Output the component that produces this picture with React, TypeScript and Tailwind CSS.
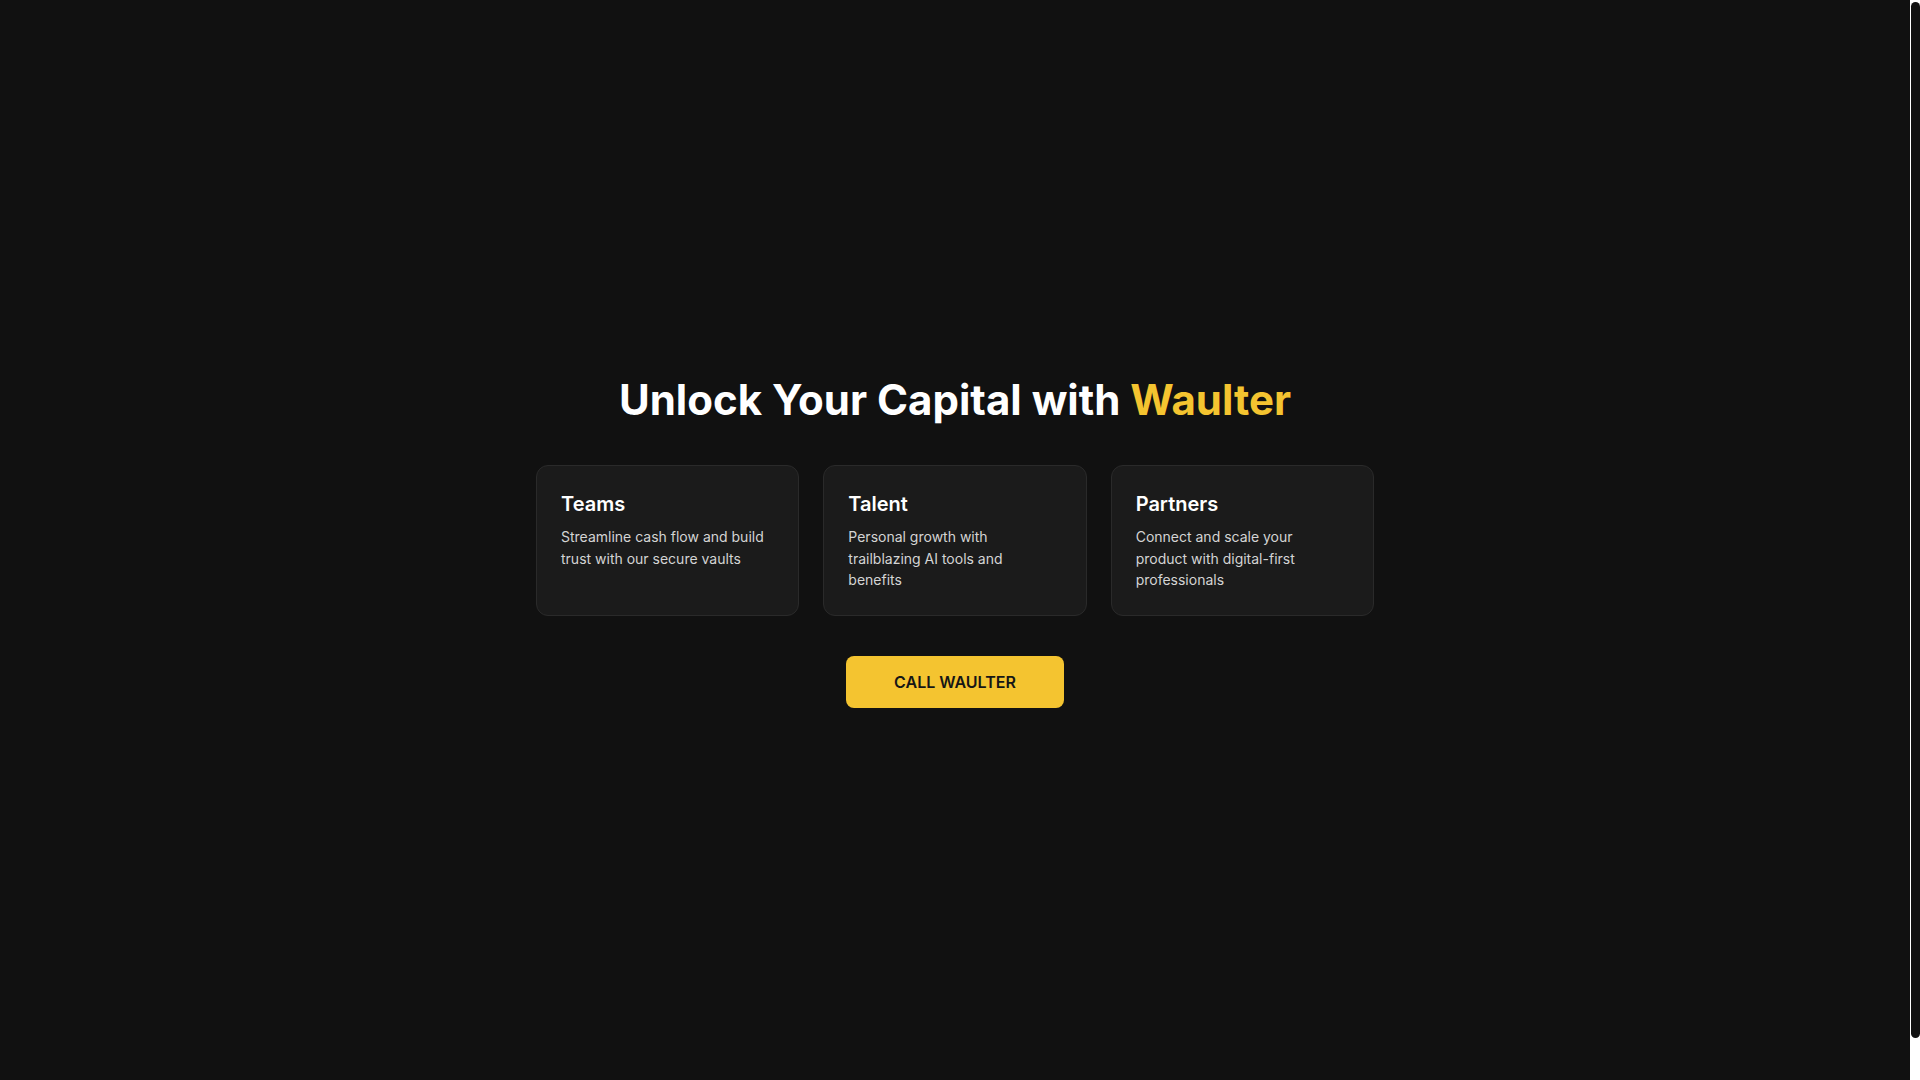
const cards = [
  { title: 'Teams', text: 'Streamline cash flow and build trust with our secure vaults' },
  { title: 'Talent', text: 'Personal growth with trailblazing AI tools and benefits' },
  { title: 'Partners', text: 'Connect and scale your product with digital-first professionals' },
];

export default function App() {
  return (
    <div
      className="flex h-screen overflow-hidden bg-[#111111] text-white"
      style={{ fontFamily: 'Inter, "Noto Sans", sans-serif' }}
    >
      <main className="flex flex-1 flex-col items-center justify-center px-6">
        <h1 className="mb-9 text-[42px] font-bold leading-[1.35]">
          Unlock Your Capital with <span className="text-[#f4c430]">Waulter</span>
        </h1>

        <div className="grid w-[838px] grid-cols-3 gap-6">
          {cards.map((card) => (
            <div key={card.title} className="rounded-xl border border-[#2a2a2a] bg-[#1b1b1b] p-6">
              <h3 className="mb-2 text-xl font-semibold leading-7 text-white">{card.title}</h3>
              <p className="max-w-[207px] text-sm leading-[21.5px] text-[#d4d4d4]">{card.text}</p>
            </div>
          ))}
        </div>

        <button className="mt-10 h-[52px] rounded-lg bg-[#f4c430] px-12 text-base font-semibold text-[#161616]">
          CALL WAULTER
        </button>
      </main>

      {/* scrollbar as seen in the capture */}
      <div className="w-[10px] shrink-0 bg-white pl-px pt-[2px]">
        <div className="h-[1036px] rounded-[5px] bg-[#111111]" />
      </div>
    </div>
  );
}
